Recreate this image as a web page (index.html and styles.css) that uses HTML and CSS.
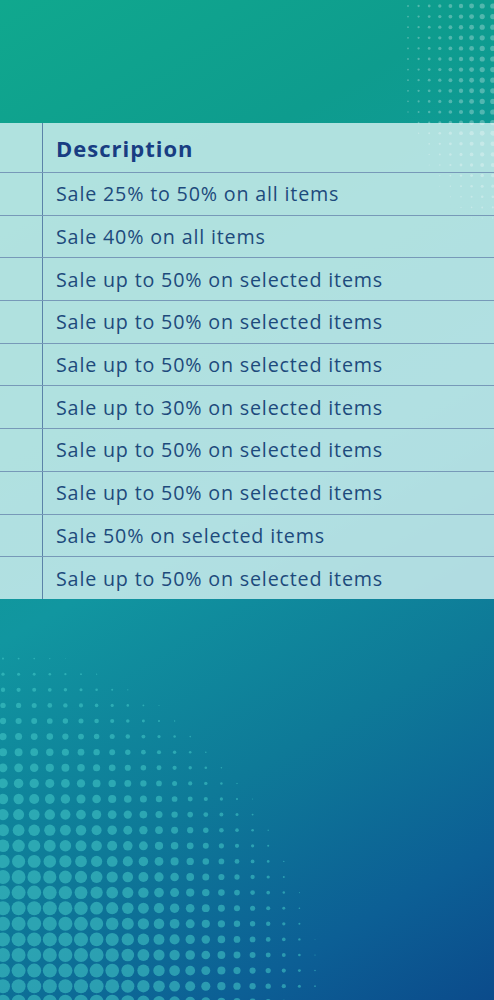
FILE: index.html
```html
<!DOCTYPE html>
<html lang="en">
<head>
<meta charset="utf-8">
<title>Sales</title>
<link rel="stylesheet" href="styles.css">
</head>
<body>
<div class="page">
  <svg class="dots dots-tr" id="dotsTop" width="110" height="230" viewBox="0 0 110 230"></svg>
  <div class="top-space"></div>
  <table class="sales">
    <thead>
      <tr><th class="c1"></th><th class="c2">Description</th></tr>
    </thead>
    <tbody>
      <tr><td class="c1"></td><td class="c2">Sale 25% to 50% on all items</td></tr>
      <tr><td class="c1"></td><td class="c2">Sale 40% on all items</td></tr>
      <tr><td class="c1"></td><td class="c2">Sale up to 50% on selected items</td></tr>
      <tr><td class="c1"></td><td class="c2">Sale up to 50% on selected items</td></tr>
      <tr><td class="c1"></td><td class="c2">Sale up to 50% on selected items</td></tr>
      <tr><td class="c1"></td><td class="c2">Sale up to 30% on selected items</td></tr>
      <tr><td class="c1"></td><td class="c2">Sale up to 50% on selected items</td></tr>
      <tr><td class="c1"></td><td class="c2">Sale up to 50% on selected items</td></tr>
      <tr><td class="c1"></td><td class="c2">Sale 50% on selected items</td></tr>
      <tr><td class="c1"></td><td class="c2">Sale up to 50% on selected items</td></tr>
    </tbody>
  </table>
  <svg class="dots dots-bl" id="dotsBottom" width="340" height="370" viewBox="0 0 340 370"></svg>
</div>
<script src="script.js"></script>
</body>
</html>
```

FILE: styles.css
```css
html, body {
  margin: 0;
  padding: 0;
}
body {
  width: 494px;
  height: 1000px;
  overflow: hidden;
  font-family: "Open Sans", "Liberation Sans", sans-serif;
}
.page {
  position: relative;
  width: 494px;
  height: 1000px;
  overflow: hidden;
  background: linear-gradient(150deg, #10a88e 0%, #0e9c8e 22%, #1196a0 50%, #0e7a98 71%, #0c5f95 88%, #0b4b8b 100%);
}
.top-space {
  height: 123px;
}
.sales {
  position: relative;
  width: 494px;
  border-collapse: collapse;
  background: rgba(212, 240, 240, 0.82);
  color: #1d4a7c;
}
.sales th, .sales td {
  padding: 0;
  border-bottom: 1px solid #7799b8;
  text-align: left;
  vertical-align: middle;
}
.sales tr:last-child td {
  border-bottom: none;
}
.sales .c1 {
  width: 42px;
  border-right: 1px solid #5b83a8;
}
.sales .c2 {
  padding-left: 13px;
}
.sales th {
  height: 49px;
  font-size: 22px;
  font-weight: 700;
  color: #183d82;
  letter-spacing: 1px;
}
.sales td {
  height: 41.7px;
  font-size: 19.7px;
  font-weight: 400;
  letter-spacing: 0.82px;
}
.dots {
  position: absolute;
  pointer-events: none;
}
.dots-tr {
  top: 0;
  right: 0;
  z-index: 2;
}
.dots-tr circle {
  fill: #ffffff;
  fill-opacity: 0.28;
}
.dots-bl {
  left: 0;
  bottom: 0;
}
.dots-bl circle {
  fill: #45cbc8;
  fill-opacity: 0.55;
}
```

FILE: script.js
```js
(function () {
  var ns = "http://www.w3.org/2000/svg";
  function add(svg, cx, cy, r) {
    if (r < 0.4) return;
    var c = document.createElementNS(ns, "circle");
    c.setAttribute("cx", cx.toFixed(2));
    c.setAttribute("cy", cy.toFixed(2));
    c.setAttribute("r", r.toFixed(2));
    svg.appendChild(c);
  }
  // top-right pattern (svg spans x 384..494, y 0..230)
  var top = document.getElementById("dotsTop");
  var step = 10.6;
  for (var y = 6; y < 230; y += step) {
    for (var x = 408; x < 500; x += step) {
      var start = 398 + Math.max(0, (y - 90)) * 0.4;
      var t = (x - start) / (494 - start);
      if (t <= 0) continue;
      var fade = y < 120 ? 1 : Math.max(0, (225 - y) / 105);
      var r = 2.6 * Math.min(1, 0.25 + t * 0.9) * Math.sqrt(fade);
      add(top, x - 384, y, r);
    }
  }
  // bottom-left pattern (svg spans x 0..340, y 630..1000)
  var bot = document.getElementById("dotsBottom");
  var s = 15.6;
  var cx0 = -30, cy0 = 1030;
  for (var yy = 643; yy < 1010; yy += s) {
    for (var xx = 3; xx < 340; xx += s) {
      var dx = (xx - cx0), dy = (yy - cy0) * 0.92;
      var d = Math.sqrt(dx * dx + dy * dy);
      var k = (360 - d) / 215;
      if (k <= 0) continue;
      var rr = 7 * Math.min(1, Math.pow(k, 0.75));
      add(bot, xx, yy - 630, rr);
    }
  }
})();
```
